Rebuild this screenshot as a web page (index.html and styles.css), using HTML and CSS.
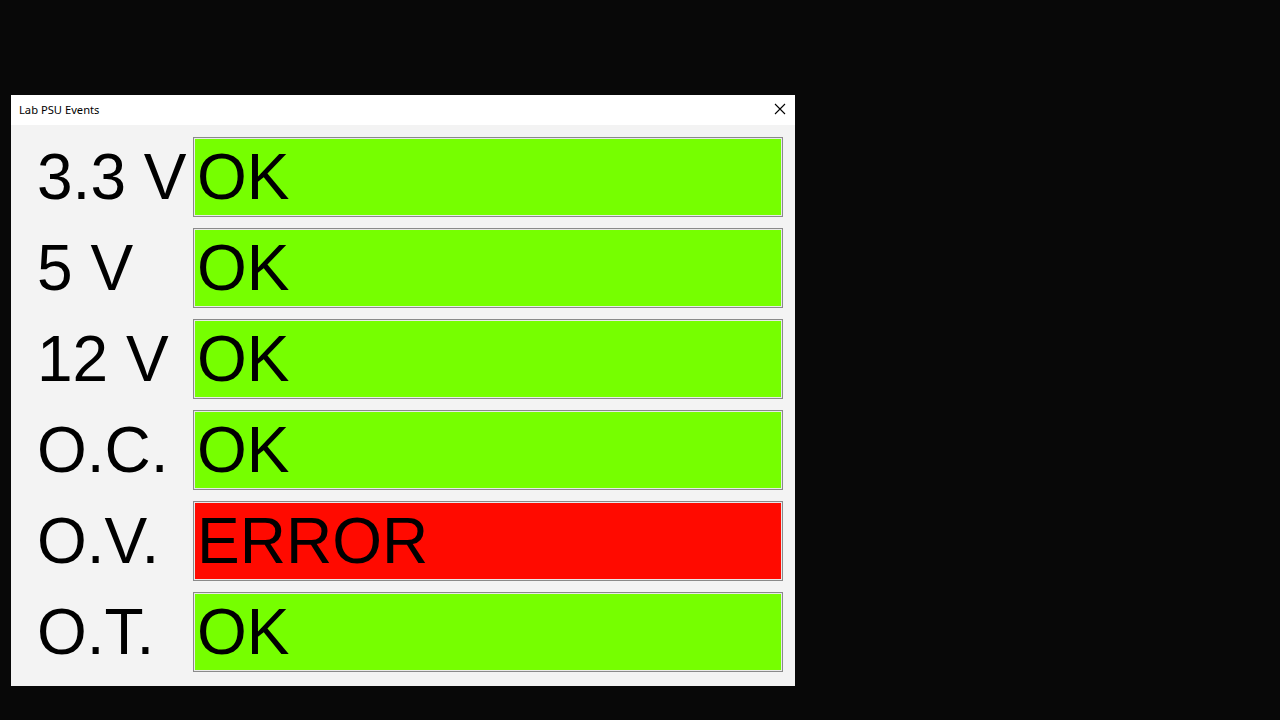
FILE: index.html
```html
<!DOCTYPE html>
<html>
<head>
<meta charset="utf-8">
<title>Lab PSU Events</title>
<link rel="stylesheet" href="styles.css">
</head>
<body>
<div class="desktop">
  <div class="window">
    <div class="titlebar">
      <span class="title">Lab PSU Events</span>
      <span class="close">
        <svg width="12" height="12" viewBox="0 0 12 12"><path d="M1 1 L11 11 M11 1 L1 11" stroke="#000" stroke-width="1.1" fill="none"/></svg>
      </span>
    </div>
    <div class="content">
      <div class="row"><span class="label">3.3 V</span><span class="status ok">OK</span></div>
      <div class="row"><span class="label">5 V</span><span class="status ok">OK</span></div>
      <div class="row"><span class="label">12 V</span><span class="status ok">OK</span></div>
      <div class="row"><span class="label">O.C.</span><span class="status ok">OK</span></div>
      <div class="row"><span class="label">O.V.</span><span class="status err">ERROR</span></div>
      <div class="row"><span class="label">O.T.</span><span class="status ok">OK</span></div>
    </div>
  </div>
</div>
</body>
</html>
```

FILE: styles.css
```css
html, body {
  margin: 0;
  padding: 0;
  background: #080808;
  width: 1280px;
  height: 720px;
  overflow: hidden;
}
.desktop {
  padding: 95px 0 0 11px;
}
.window {
  width: 784px;
  height: 591px;
  background: #f3f3f3;
  display: flex;
  flex-direction: column;
}
.titlebar {
  height: 30px;
  background: #ffffff;
  display: flex;
  align-items: center;
  justify-content: space-between;
  padding: 0 9px 0 8px;
}
.title {
  font-family: "Noto Sans", "Open Sans", sans-serif;
  font-size: 11.2px;
  color: #000;
  margin-top: -2px;
}
.close {
  display: flex;
  width: 12px;
  height: 12px;
  margin-top: -2px;
}
.content {
  display: flex;
  flex-direction: column;
  gap: 11px;
  padding: 12px 12px 0 26px;
}
.row {
  display: flex;
  height: 80px;
  align-items: center;
}
.label {
  width: 156px;
  font-family: "Liberation Sans", Arial, sans-serif;
  font-size: 64px;
  color: #000;
  line-height: 80px;
}
.status {
  flex: 1;
  height: 78px;
  border: 1px solid #8a8a8a;
  box-shadow: inset 0 0 0 1px #e9e9e9;
  font-family: "Liberation Sans", Arial, sans-serif;
  font-size: 64px;
  line-height: 78px;
  color: #000;
  padding-left: 3px;
  box-sizing: content-box;
}
.ok { background: #76ff00; }
.err { background: #ff0a00; }
```
